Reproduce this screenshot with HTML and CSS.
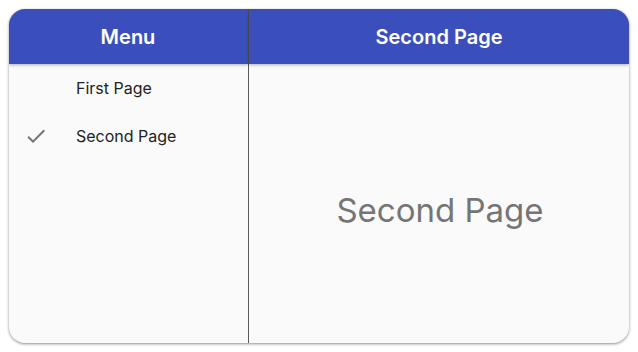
FILE: index.html
```html
<!DOCTYPE html>
<html>
<head>
<meta charset="utf-8">
<link rel="stylesheet" href="styles.css">
</head>
<body>
<div class="card">
  <div class="pane menu-pane">
    <div class="header">Menu</div>
    <div class="list">
      <div class="item"><span class="icon"></span><span class="label">First Page</span></div>
      <div class="item"><span class="icon"><svg viewBox="0 0 24 24" width="24" height="24"><path d="M9 16.17L4.83 12l-1.42 1.41L9 19 21 7l-1.41-1.41z" fill="#757575"/></svg></span><span class="label">Second Page</span></div>
    </div>
  </div>
  <div class="divider"></div>
  <div class="pane main-pane">
    <div class="header">Second Page</div>
    <div class="content">Second Page</div>
  </div>
</div>
</body>
</html>
```
FILE: styles.css
```css
html, body { margin: 0; padding: 0; background: #fff; }
body { font-family: Inter, "Noto Sans", sans-serif; }
.card {
  margin: 9px;
  width: 620px;
  height: 334px;
  border-radius: 16px;
  overflow: hidden;
  background: #fafafa;
  box-shadow: 0 1px 3px rgba(0,0,0,0.45);
  display: flex;
}
.pane { display: flex; flex-direction: column; }
.menu-pane { width: 239px; }
.main-pane { flex: 1; }
.divider { width: 1px; background: #5a5a5a; }
.header {
  height: 55px;
  background: #3a4fbb;
  color: #fff;
  font-size: 20px;
  font-weight: 600;
  display: flex;
  align-items: center;
  justify-content: center;
  box-shadow: 0 1px 3px rgba(0,0,0,0.3);
  position: relative;
  z-index: 1;
}
.menu-pane .header { padding-right: 1px; }
.list { display: flex; flex-direction: column; }
.item { height: 48px; display: flex; align-items: center; padding-left: 15px; }
.icon { width: 24px; height: 24px; margin-right: 28px; display: flex; }
.label { font-size: 16px; color: #222; }
.content {
  flex: 1;
  display: flex;
  align-items: center;
  justify-content: center;
  font-size: 33px;
  color: #757575;
  padding-top: 12px;
  padding-left: 2px;
}
```
